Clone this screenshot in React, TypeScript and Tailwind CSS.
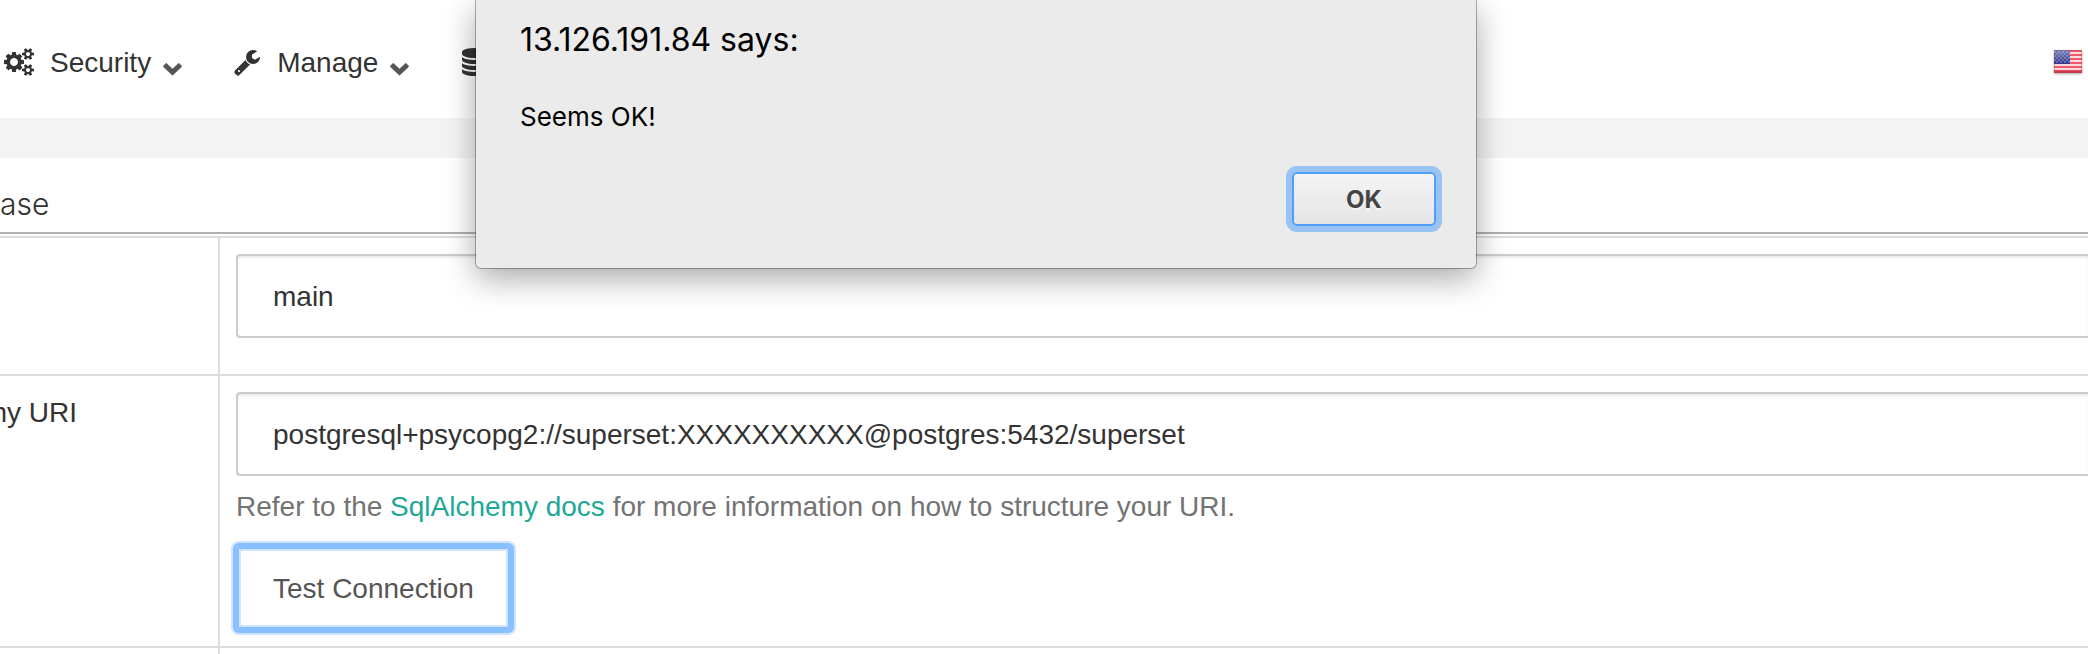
import React from "react";

type IconProps = { className?: string };

function CogsIcon({ className }: IconProps) {
  return (
    <svg viewBox="0 0 1920 1792" fill="currentColor" aria-hidden="true" className={className}>
      <path d="M896 896q0-106-75-181t-181-75-181 75-75 181 75 181 181 75 181-75 75-181zm768 512q0-52-38-90t-90-38-90 38-38 90q0 53 37.5 90.5t90.5 37.5 90.5-37.5 37.5-90.5zm0-1024q0-52-38-90t-90-38-90 38-38 90q0 53 37.5 90.5t90.5 37.5 90.5-37.5 37.5-90.5zm-384 421v185q0 10-7 19.5t-16 10.5l-155 24q-11 35-32 76 34 48 90 115 7 11 7 20 0 12-7 19-23 30-82.5 89.5t-78.5 59.5q-11 0-21-7l-115-90q-37 19-77 31-11 108-23 155-7 24-30 24h-186q-11 0-20-7.5t-10-17.5l-23-153q-34-10-75-31l-118 89q-7 7-20 7-11 0-21-8-144-133-144-160 0-9 7-19 10-14 41-53t47-61q-23-44-35-82l-152-24q-10-1-17-9.5t-7-19.5v-185q0-10 7-19.5t16-10.5l155-24q11-35 32-76-34-48-90-115-7-11-7-20 0-12 7-20 22-30 82-89t79-59q11 0 21 7l115 90q34-18 77-32 11-108 23-154 7-24 30-24h186q11 0 20 7.5t10 17.5l23 153q34 10 75 31l118-89q8-7 20-7 11 0 21 8 144 133 144 160 0 8-7 19-12 16-42 54t-45 60q23 48 34 82l152 23q10 2 17 10.5t7 19.5zm640 533v140q0 16-149 31-12 27-30 52 51 113 51 138 0 4-4 7-122 71-124 71-8 0-46-47t-52-68q-20 2-30 2t-30-2q-14 21-52 68t-46 47q-2 0-124-71-4-3-4-7 0-25 51-138-18-25-30-52-149-15-149-31v-140q0-16 149-31 13-29 30-52-51-113-51-138 0-4 4-7 4-2 35-20t59-34 30-16q8 0 46 46.5t52 67.5q20-2 30-2t30 2q51-71 92-112l6-2q4 0 124 70 4 3 4 7 0 25-51 138 17 23 30 52 149 15 149 31zm0-1024v140q0 16-149 31-12 27-30 52 51 113 51 138 0 4-4 7-122 71-124 71-8 0-46-47t-52-68q-20 2-30 2t-30-2q-14 21-52 68t-46 47q-2 0-124-71-4-3-4-7 0-25 51-138-18-25-30-52-149-15-149-31v-140q0-16 149-31 13-29 30-52-51-113-51-138 0-4 4-7 4-2 35-20t59-34 30-16q8 0 46 46.5t52 67.5q20-2 30-2t30 2q51-71 92-112l6-2q4 0 124 70 4 3 4 7 0 25-51 138 17 23 30 52 149 15 149 31z" />
    </svg>
  );
}

function WrenchIcon({ className }: IconProps) {
  return (
    <svg viewBox="0 0 1792 1792" fill="currentColor" aria-hidden="true" className={className}>
      <path d="M448 1472q0-26-19-45t-45-19-45 19-19 45 19 45 45 19 45-19 19-45zm644-420l-682 682q-37 37-90 37-52 0-91-37l-106-108q-38-36-38-90 0-53 38-91l681-681q39 98 114.5 173.5t173.5 114.5zm634-435q0 39-23 106-47 134-164.5 217.5t-258.5 83.5q-185 0-316.5-131.5t-131.5-316.5 131.5-316.5 316.5-131.5q58 0 121.5 16.5t107.5 46.5q16 11 16 28t-16 28l-293 169v224l193 107q5-3 79-48.5t135.5-81 70.5-35.5q15 0 23.5 10t8.5 25z" />
    </svg>
  );
}

function DatabaseIcon({ className }: IconProps) {
  return (
    <svg viewBox="0 0 1792 1792" fill="currentColor" aria-hidden="true" className={className}>
      <path d="M896 768q237 0 443-43t325-127v170q0 69-103 128t-280 93.5-385 34.5-385-34.5-280-93.5-103-128v-170q119 84 325 127t443 43zm0 768q237 0 443-43t325-127v170q0 69-103 128t-280 93.5-385 34.5-385-34.5-280-93.5-103-128v-170q119 84 325 127t443 43zm0-384q237 0 443-43t325-127v170q0 69-103 128t-280 93.5-385 34.5-385-34.5-280-93.5-103-128v-170q119 84 325 127t443 43zm0-1152q208 0 385 34.5t280 93.5 103 128v128q0 69-103 128t-280 93.5-385 34.5-385-34.5-280-93.5-103-128v-128q0-69 103-128t280-93.5 385-34.5z" />
    </svg>
  );
}

function Caret() {
  return (
    <svg viewBox="0 0 19 14" aria-hidden="true" className="mt-3.5 h-3.5 w-[19px] shrink-0 text-[#555]">
      <path
        d="M3.2 1.2 9.5 7 15.8 1.2 18.4 3.8v1.2L9.5 13.2.6 5V3.8z"
        fill="currentColor"
        stroke="currentColor"
        strokeWidth="0.6"
        strokeLinejoin="round"
      />
    </svg>
  );
}

function UsFlag() {
  const stripes = [0, 1, 2, 3, 4, 5];
  const stars = [0, 1, 2, 3, 4, 5, 6, 7];
  return (
    <svg viewBox="0 0 32 28" role="img" aria-label="English" className="h-7 w-8">
      <defs>
        <linearGradient id="canton" x1="0" y1="0" x2="0" y2="1">
          <stop offset="0" stopColor="#7f83b8" />
          <stop offset="1" stopColor="#2f3590" />
        </linearGradient>
        <filter id="flagShadow" x="-20%" y="-20%" width="140%" height="150%">
          <feDropShadow dx="0" dy="1" stdDeviation="1.2" floodColor="#000" floodOpacity="0.35" />
        </filter>
      </defs>
      <rect x="2" y="2" width="28" height="23" rx="1" fill="#fbd9dc" filter="url(#flagShadow)" />
      {stripes.map((i) => (
        <rect key={i} x="2" y={2 + i * 4} width="28" height="2" fill="#f05a68" />
      ))}
      <rect x="2" y="22.6" width="28" height="2.4" fill="#d23a4b" />
      <rect x="2" y="2" width="16" height="14" fill="url(#canton)" />
      {stars.map((c) =>
        [0, 1, 2].map((r) => (
          <rect key={`${c}-${r}`} x={2 + c * 2} y={3 + r * 4 + (c % 2) * 2} width="2" height="2" fill="#fff" opacity="0.22" />
        ))
      )}
      <rect x="2.5" y="2.5" width="27" height="22" rx="1" fill="none" stroke="#8a3a50" strokeOpacity="0.3" />
    </svg>
  );
}

function NavMenu({ icon, label }: { icon: React.ReactNode; label: string }) {
  return (
    <button type="button" className="flex items-center">
      {icon}
      <span className="mr-3 ml-4 pt-0.5">{label}</span>
      <Caret />
    </button>
  );
}

const field =
  "block h-[84px] w-full rounded-l-[4px] border-2 border-r-0 border-[#ccc] bg-white px-[35px] pt-0.5 text-[28px] text-[#333] shadow-[inset_0_2px_2px_rgba(0,0,0,0.075)] outline-none";

export default function App() {
  return (
    <div className="relative min-h-screen overflow-hidden bg-white font-['Liberation_Sans',Arial,sans-serif] text-[28px] leading-10 text-[#333]">
      <header className="flex items-center justify-between pt-[41px] pr-1 pb-[35px] pl-1">
        <nav className="flex items-center gap-[51px]">
          <NavMenu icon={<CogsIcon className="h-7 w-[30px]" />} label="Security" />
          <NavMenu icon={<WrenchIcon className="size-7" />} label="Manage" />
          <button type="button" aria-label="Sources">
            <DatabaseIcon className="size-7" />
          </button>
        </nav>
        <UsFlag />
      </header>

      <div className="h-10 bg-[#f4f4f4]" />

      <main>
        <h1 className="mb-0.5 border-b-2 border-[#b0b0b0] pt-[26px] pb-2 font-['Inter',sans-serif] text-[30px] font-light">
          ase
        </h1>
        <table className="w-full border-separate border-spacing-0 border-t-2 border-[#ddd]">
          <tbody>
            <tr>
              <th className="w-[220px] border-r-2 border-b-2 border-[#ddd]" />
              <td className="border-b-2 border-[#ddd] pt-4 pb-9 pl-4">
                <input aria-label="Database" className={field} defaultValue="main" />
              </td>
            </tr>
            <tr>
              <th className="border-r-2 border-b-2 border-[#ddd] pt-[17px] text-left align-top font-normal">
                <label htmlFor="uri" className="flex w-[77px] justify-end overflow-hidden whitespace-nowrap">
                  my URI
                </label>
              </th>
              <td className="border-b-2 border-[#ddd] py-4 pl-4">
                <input id="uri" className={field} defaultValue="postgresql+psycopg2://superset:XXXXXXXXXX@postgres:5432/superset" />
                <p className="mt-[11px] mb-[19px] text-[#737373]">
                  Refer to the{" "}
                  <a href="#docs" className="text-[#1fa898]">
                    SqlAlchemy docs
                  </a>{" "}
                  for more information on how to structure your URI.
                </p>
                <button
                  type="button"
                  className="block h-[84px] rounded-[3px] bg-white px-[37px] pt-0.5 text-[#555] shadow-[inset_0_0_0_3px_#88c0ff,inset_0_0_0_5px_#cfe5ff,0_0_0_3px_#88c0ff,0_0_0_5px_#cfe5ff]"
                >
                  Test Connection
                </button>
              </td>
            </tr>
            <tr>
              <th className="h-1.5 border-r-2 border-[#ddd] p-0" />
              <td className="p-0" />
            </tr>
          </tbody>
        </table>
      </main>

      <div
        role="alertdialog"
        aria-labelledby="alert-title"
        className="absolute top-0 left-[476px] flex w-[1000px] flex-col rounded-b-[5px] bg-[#ebebeb] px-11 pt-5 pb-[42px] font-['Inter',sans-serif] text-black shadow-[0_0_0_1px_rgba(0,0,0,0.3),0_10px_32px_rgba(0,0,0,0.35)]"
      >
        <h2 id="alert-title" className="text-[32px]">
          13.126.191.84 says:
        </h2>
        <p className="mt-[37px] text-[26px]">Seems OK!</p>
        <button
          type="button"
          className="mt-[35px] -mr-1 h-[54px] w-36 self-end rounded-[5px] border-2 border-[#4f9ffa] bg-linear-to-b from-[#f4f4f4] to-[#e5e5e5] pt-0.5 text-[24px] font-bold text-[#444] shadow-[0_0_0_6px_#98c3f3] text-shadow-[0_2px_0_#f5f5f5]"
        >
          OK
        </button>
      </div>
    </div>
  );
}
